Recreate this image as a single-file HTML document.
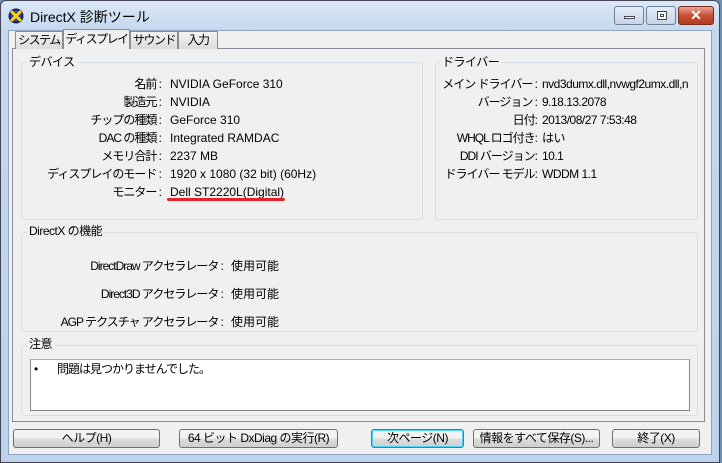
<!DOCTYPE html>
<html><head><meta charset="utf-8"><style>
*{margin:0;padding:0;box-sizing:border-box}
body{width:722px;height:463px;overflow:hidden;background:#6f8fb0;font-family:"Liberation Sans","Noto Sans CJK JP",sans-serif;font-size:12px;color:#000;position:relative}
.win{position:absolute;left:0;top:0;width:720px;height:463px;background:linear-gradient(#dbe8f6,#c4d8ee 30px,#bcd3ec);border:1px solid #445;border-radius:6px 6px 0 0}
.client{position:absolute;left:8px;top:30px;width:704px;height:425px;background:#f0f0f0;border:1px solid #8ea4c0}
.a{position:absolute;white-space:nowrap;line-height:14px}
.r{text-align:right}
.n{letter-spacing:-1px}
.grp{position:absolute;border:1px solid #d5dfe5;border-radius:3px}
.gl{position:absolute;background:#f0f0f0;padding:0 2px;line-height:14px;white-space:nowrap;letter-spacing:-0.5px}
.btn{position:absolute;height:19px;border:1px solid #707070;border-radius:3px;background:linear-gradient(#f2f2f2 50%,#dddddd 50%,#cfcfcf);text-align:center;line-height:17px;font-size:12px;white-space:nowrap;letter-spacing:-0.5px}
.tab{position:absolute;top:31px;height:18px;border:1px solid #898c95;border-bottom:none;background:linear-gradient(#f2f2f2,#dcdcdc);line-height:16px;text-align:center;white-space:nowrap;letter-spacing:-1.5px;overflow:hidden}
.cb{position:absolute;top:6px;height:19px;border:1px solid #6f7f96;border-radius:3px;background:linear-gradient(#e6eef8,#c4d4e8)}
</style></head><body>
<div class="win"></div>
<svg style="position:absolute;left:8px;top:8px" width="16" height="16" viewBox="0 0 16 16"><circle cx="8" cy="8" r="7.5" fill="#1a1a5a"/><circle cx="8" cy="8" r="6" fill="#2b3e9c"/><path d="M4 4L12 12M12 4L4 12" stroke="#ffd400" stroke-width="3" stroke-linecap="round"/></svg>
<div class="a" style="left:30px;top:9px;font-size:14px;line-height:16px">DirectX 診断ツール</div>
<div class="cb" style="left:614px;width:30px"><div style="position:absolute;left:9px;top:9px;width:11px;height:3px;background:#fff;border:1px solid #445"></div></div>
<div class="cb" style="left:646px;width:30px"><div style="position:absolute;left:10px;top:4px;width:10px;height:9px;border:1px solid #445;background:#fff"><div style="margin:2px;width:4px;height:3px;border:1px solid #445"></div></div></div>
<div class="cb" style="left:678px;width:36px;background:linear-gradient(#e9a597,#c74f36 50%,#b43b20);border-color:#7a2a1a;color:#fff;font-weight:bold;text-align:center;line-height:17px;font-size:14px">✕</div>
<div class="client"></div>
<div style="position:absolute;left:12px;top:48px;width:693px;height:374px;border:1px solid #898c95;background:#f0f0f0"></div>
<div class="tab" style="left:15px;width:48px">システム</div>
<div class="tab" style="left:63px;top:29px;height:20px;width:67px;background:#f0f0f0;z-index:2;line-height:18px">ディスプレイ</div>
<div class="tab" style="left:130px;width:48px">サウンド</div>
<div class="tab" style="left:178px;width:40px">入力</div>

<div class="grp" style="left:21px;top:62px;width:402px;height:158px"></div>
<div class="gl" style="left:27px;top:55px">デバイス</div>
<div class="a r n" style="left:20px;width:141px;top:75px;line-height:18px">名前 :<br>製造元 :<br>チップの種類 :<br>DAC の種類 :<br>メモリ合計 :<br>ディスプレイのモード :<br>モニター :</div>
<div class="a" style="left:170px;top:75px;line-height:18px">NVIDIA GeForce 310<br>NVIDIA<br>GeForce 310<br>Integrated RAMDAC<br>2237 MB<br>1920 x 1080 (32 bit) (60Hz)<br>Dell ST2220L(Digital)</div>
<div style="position:absolute;left:167px;top:198px;width:118px;height:3px;background:#e8202a;border-radius:2px"></div>

<div class="grp" style="left:435px;top:62px;width:263px;height:158px"></div>
<div class="gl" style="left:440px;top:55px">ドライバー</div>
<div class="a r n" style="left:440px;width:97px;top:75px;line-height:18px">メイン ドライバー :<br>バージョン :<br>日付:<br>WHQL ロゴ付き:<br>DDI バージョン:<br>ドライバー モデル:</div>
<div class="a" style="left:542px;top:75px;line-height:18px;width:148px;overflow:hidden;letter-spacing:-0.5px">nvd3dumx.dll,nvwgf2umx.dll,n<br>9.18.13.2078<br>2013/08/27 7:53:48<br>はい<br>10.1<br>WDDM 1.1</div>

<div class="grp" style="left:21px;top:232px;width:677px;height:100px"></div>
<div class="gl" style="left:27px;top:224px">DirectX の機能</div>
<div class="a r n" style="left:30px;width:193px;top:252px;line-height:28px">DirectDraw アクセラレータ :<br>Direct3D アクセラレータ :<br>AGP テクスチャ アクセラレータ :</div>
<div class="a" style="left:231px;top:252px;line-height:28px">使用可能<br>使用可能<br>使用可能</div>

<div class="grp" style="left:21px;top:345px;width:677px;height:71px"></div>
<div class="gl" style="left:27px;top:337px">注意</div>
<div style="position:absolute;left:30px;top:359px;width:660px;height:52px;background:#fff;border:1px solid #828790;border-top-color:#abadb3"></div>
<div class="a" style="left:34px;top:362px">•</div>
<div class="a n" style="left:57px;top:362px">問題は見つかりませんでした。</div>

<div class="btn" style="left:13px;top:429px;width:147px">ヘルプ(H)</div>
<div class="btn" style="left:179px;top:429px;width:159px">64 ビット DxDiag の実行(R)</div>
<div class="btn" style="left:371px;top:429px;width:93px;border-color:#3c7fb1;box-shadow:inset 0 0 0 1px #48d8fb">次ページ(N)</div>
<div class="btn" style="left:473px;top:429px;width:127px">情報をすべて保存(S)...</div>
<div class="btn" style="left:612px;top:429px;width:88px">終了(X)</div>
</body></html>
